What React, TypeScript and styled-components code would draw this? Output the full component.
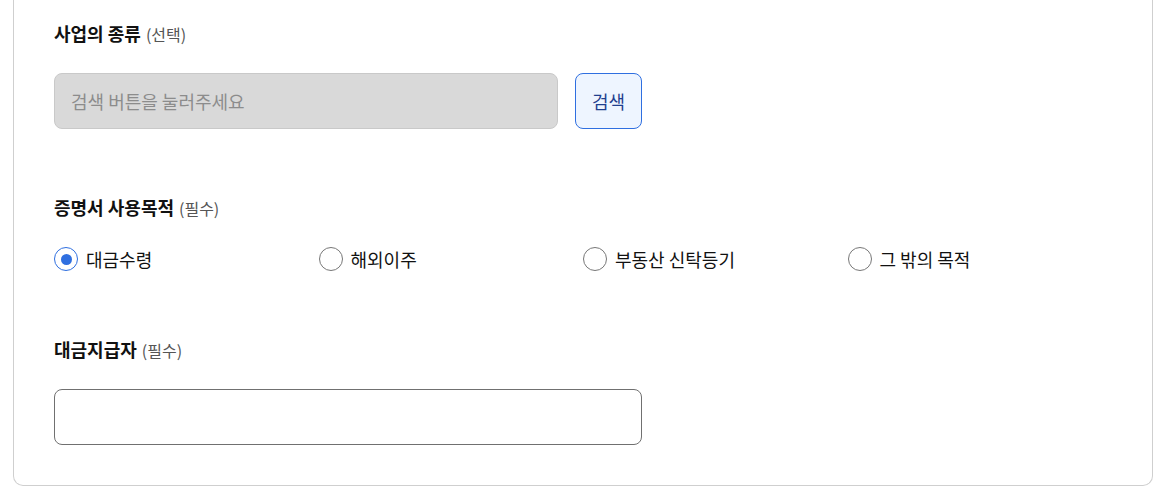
import React, { useState } from "react";
import styled, { createGlobalStyle } from "styled-components";

const Global = createGlobalStyle`
  html, body { margin: 0; padding: 0; background: #fff; }
  body { font-family: "Noto Sans CJK KR", "Noto Sans", sans-serif; color: #111; }
  * { box-sizing: border-box; }
`;

const Page = styled.div`
  padding: 0 8px 7px 13px;
`;

const Card = styled.div`
  width: 1140px;
  border: 1px solid #cfcfcf;
  border-top: none;
  border-radius: 0 0 10px 10px;
  padding: 20px 40px 40px;
  display: flex;
  flex-direction: column;
  gap: 65px;
`;

const Section = styled.section`
  display: flex;
  flex-direction: column;
  gap: 26px;
`;

const Title = styled.h3`
  margin: 0;
  display: flex;
  align-items: baseline;
  height: 27px;
  font-size: 18px;
  line-height: 27px;
  font-weight: 700;
  color: #111;
`;

const Hint = styled.span`
  font-size: 16px;
  font-weight: 400;
  color: #555;
  margin-left: 5px;
`;

const SearchRow = styled.div`
  display: flex;
  gap: 17px;
  width: 588px;
`;

const TextInput = styled.input<{ $disabled?: boolean }>`
  flex: 1;
  height: 56px;
  border-radius: 8px;
  border: 1px solid ${(p) => (p.$disabled ? "#c9c9c9" : "#707070")};
  background: ${(p) => (p.$disabled ? "#d9d9d9" : "#fff")};
  padding: 0 16px;
  font-family: inherit;
  font-size: 18px;
  color: #111;
  outline: none;
  &::placeholder { color: #8c8c8c; }
`;

const WideInput = styled(TextInput)`
  flex: none;
  width: 588px;
`;

const SearchButton = styled.button`
  width: 67px;
  height: 56px;
  border-radius: 8px;
  border: 1px solid #2f6fe0;
  background: #eef5ff;
  color: #1f3f8f;
  font-family: inherit;
  font-size: 18px;
  padding: 0;
  cursor: pointer;
`;

const RadioGrid = styled.div`
  display: grid;
  grid-template-columns: repeat(4, 1fr);
  height: 24px;
`;

const RadioLabel = styled.label`
  display: flex;
  align-items: center;
  gap: 8px;
  font-size: 18px;
  line-height: 24px;
  color: #111;
  cursor: pointer;
`;

const RadioCircle = styled.span<{ $checked: boolean }>`
  width: 24px;
  height: 24px;
  border-radius: 50%;
  border: ${(p) => (p.$checked ? "1.5px solid #2f6fe0" : "1px solid #777")};
  display: flex;
  align-items: center;
  justify-content: center;
  flex: none;
  &::after {
    content: "";
    width: 11px;
    height: 11px;
    border-radius: 50%;
    background: ${(p) => (p.$checked ? "#2f6fe0" : "transparent")};
  }
`;

const HiddenRadio = styled.input`
  display: none;
`;

const options = ["대금수령", "해외이주", "부동산 신탁등기", "그 밖의 목적"];

export default function App() {
  const [sel, setSel] = useState(0);
  return (
    <Page>
      <Global />
      <Card>
        <Section>
          <Title>
            사업의 종류<Hint>(선택)</Hint>
          </Title>
          <SearchRow>
            <TextInput $disabled readOnly placeholder="검색 버튼을 눌러주세요" />
            <SearchButton>검색</SearchButton>
          </SearchRow>
        </Section>
        <Section>
          <Title>
            증명서 사용목적<Hint>(필수)</Hint>
          </Title>
          <RadioGrid>
            {options.map((o, i) => (
              <RadioLabel key={o}>
                <HiddenRadio type="radio" name="purpose" checked={sel === i} onChange={() => setSel(i)} />
                <RadioCircle $checked={sel === i} />
                {o}
              </RadioLabel>
            ))}
          </RadioGrid>
        </Section>
        <Section>
          <Title>
            대금지급자<Hint>(필수)</Hint>
          </Title>
          <WideInput />
        </Section>
      </Card>
    </Page>
  );
}
